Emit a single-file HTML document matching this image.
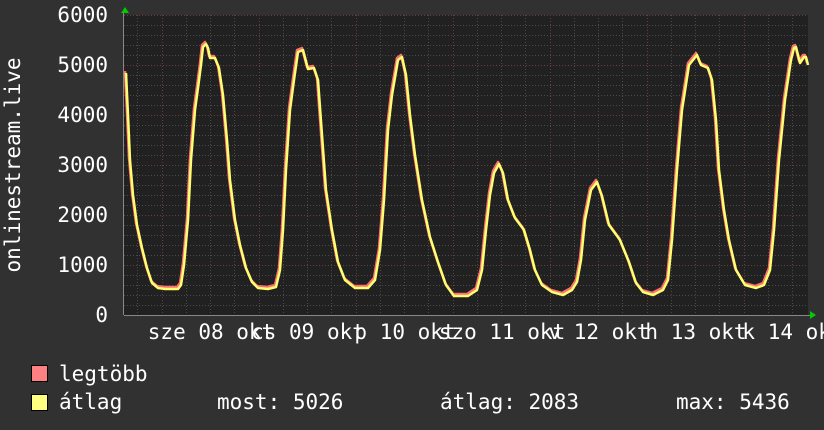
<!DOCTYPE html>
<html><head><meta charset="utf-8"><style>
html,body{margin:0;padding:0;background:#313131;}
svg{display:block;}
text{font-family:"DejaVu Sans Mono","Liberation Mono",monospace;fill:#fff;font-size:21px;}
</style></head><body>
<svg width="824" height="430" xmlns="http://www.w3.org/2000/svg">
<rect width="824" height="430" fill="#313131"/>
<rect x="124" y="15" width="684" height="300" fill="#212121"/>
<g stroke="#4a4a4a" stroke-width="1" stroke-dasharray="1,2">
<path d="M124 25.5H808M124 35.5H808M124 45.5H808M124 55.5H808M124 75.5H808M124 85.5H808M124 95.5H808M124 105.5H808M124 125.5H808M124 135.5H808M124 145.5H808M124 155.5H808M124 175.5H808M124 185.5H808M124 195.5H808M124 205.5H808M124 225.5H808M124 235.5H808M124 245.5H808M124 255.5H808M124 275.5H808M124 285.5H808M124 295.5H808M124 305.5H808"/>
<path d="M137.5 15V315M186.5 15V315M210.5 15V315M234.5 15V315M283.5 15V315M307.5 15V315M331.5 15V315M380.5 15V315M404.5 15V315M428.5 15V315M477.5 15V315M501.5 15V315M525.5 15V315M574.5 15V315M598.5 15V315M622.5 15V315M671.5 15V315M695.5 15V315M719.5 15V315M768.5 15V315M792.5 15V315"/>
</g>
<g stroke="#6a3c3c" stroke-width="1" stroke-dasharray="1,2">
<path d="M124 15.5H808M124 65.5H808M124 115.5H808M124 165.5H808M124 215.5H808M124 265.5H808"/>
<path d="M162.5 15V315M259.5 15V315M356.5 15V315M453.5 15V315M550.5 15V315M647.5 15V315M744.5 15V315"/>
</g>
<path d="M124 315.5H810M123.5 12V315" stroke="#888" stroke-width="1"/>
<path d="M121 13L125 7L129 13Z" fill="#0c0"/>
<path d="M810 311L816 315L810 319Z" fill="#0c0"/>
<g fill="none" stroke-linejoin="round" stroke-width="2.5">
<polyline stroke="#ff7070" transform="translate(-1,-2)" points="126,73 128,115 130,160 133,195 137,225 142,248 147,268 152,283 158,288 165,289 178,289 181,285 184,265 188,220 191,160 195,110 198,88 201,65 203,47 206,44 208,48 210,58 215,58 219,68 223,95 227,140 230,180 235,220 240,245 246,268 252,282 258,288 268,289 276,287 280,270 283,230 286,170 290,110 294,80 298,52 303,50 308,69 314,68 318,80 322,135 326,190 332,230 338,262 345,280 355,288 368,288 375,280 380,250 384,200 388,130 392,95 398,60 402,57 406,75 410,115 415,155 422,200 430,237 438,262 446,285 454,296 462,296 468,296 477,290 482,270 486,230 490,195 494,173 499,164 503,173 508,200 515,218 524,230 530,250 535,270 542,285 552,292 563,295 572,290 577,282 581,260 585,220 591,190 597,182 602,196 609,225 620,240 629,262 636,283 643,292 653,295 663,290 668,280 672,240 677,170 682,110 689,65 697,55 701,65 708,68 712,80 716,120 719,170 724,210 729,240 736,270 745,285 756,288 764,285 770,270 774,230 779,160 785,100 791,60 794,48 796,47 800,63 804,57 806,57 808,65"/>
<polyline stroke="#ffff70" points="126,73 128,115 130,160 133,195 137,225 142,248 147,268 152,283 158,288 165,289 178,289 181,285 184,265 188,220 191,160 195,110 198,88 201,65 203,47 206,44 208,48 210,58 215,58 219,68 223,95 227,140 230,180 235,220 240,245 246,268 252,282 258,288 268,289 276,287 280,270 283,230 286,170 290,110 294,80 298,52 303,50 308,69 314,68 318,80 322,135 326,190 332,230 338,262 345,280 355,288 368,288 375,280 380,250 384,200 388,130 392,95 398,60 402,57 406,75 410,115 415,155 422,200 430,237 438,262 446,285 454,296 462,296 468,296 477,290 482,270 486,230 490,195 494,173 499,164 503,173 508,200 515,218 524,230 530,250 535,270 542,285 552,292 563,295 572,290 577,282 581,260 585,220 591,190 597,182 602,196 609,225 620,240 629,262 636,283 643,292 653,295 663,290 668,280 672,240 677,170 682,110 689,65 697,55 701,65 708,68 712,80 716,120 719,170 724,210 729,240 736,270 745,285 756,288 764,285 770,270 774,230 779,160 785,100 791,60 794,48 796,47 800,63 804,57 806,57 808,65"/>
</g>
<g text-anchor="end">
<text x="108" y="22">6000</text><text x="108" y="72">5000</text><text x="108" y="122">4000</text>
<text x="108" y="172">3000</text><text x="108" y="222">2000</text><text x="108" y="272">1000</text><text x="108" y="322">0</text>
</g>
<text transform="translate(20,165) rotate(-90)" text-anchor="middle">onlinestream.live</text>
<g text-anchor="middle">
<text x="211" y="339">sze 08 okt</text><text x="308" y="339">cs 09 okt</text><text x="405" y="339">p 10 okt</text>
<text x="502" y="339">szo 11 okt</text><text x="599" y="339">v 12 okt</text><text x="696" y="339">h 13 okt</text><text x="793" y="339">k 14 okt</text>
</g>
<rect x="31.5" y="365.5" width="16" height="16" fill="#ff8080" stroke="#000"/>
<rect x="31.5" y="394.5" width="16" height="16" fill="#ffff80" stroke="#000"/>
<text x="59" y="381">legtöbb</text>
<text x="59" y="409">átlag</text>
<text x="217" y="409">most: 5026</text>
<text x="440" y="409">átlag: 2083</text>
<text x="676" y="409">max: 5436</text>
</svg>
</body></html>
